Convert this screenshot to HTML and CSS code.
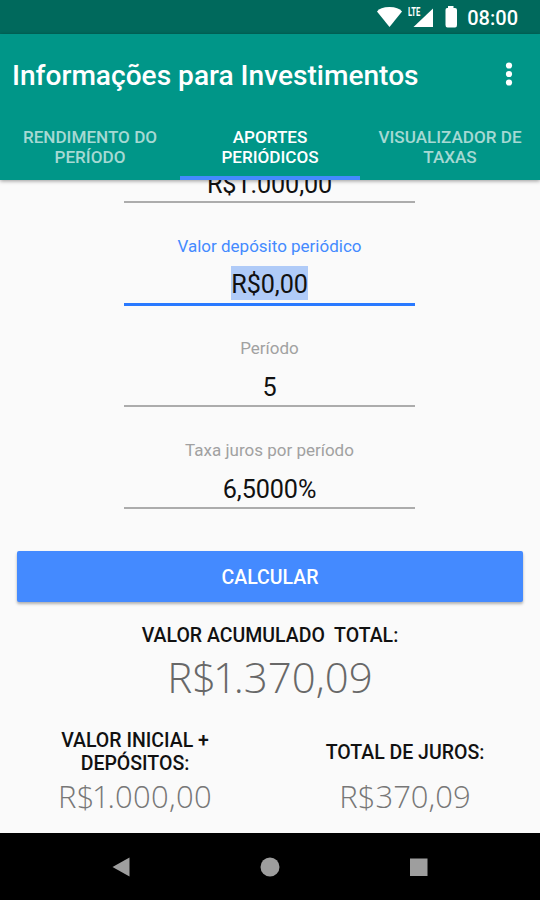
FILE: index.html
```
<!DOCTYPE html>
<html lang="pt-BR">
<head>
<meta charset="utf-8">
<title>Informações para Investimentos</title>
<link rel="stylesheet" href="styles.css">
</head>
<body>
<div class="screen">
  <div class="status">
    <svg class="status-icons" viewBox="0 0 84 34" aria-hidden="true">
      <path fill="#fff" d="M1 11.500 Q4 7 13.500 7 Q22.500 7 26 11.500 L13.500 27 Z"/>
      <path fill="#fff" d="M57 8.500 V27 H37.500 Z"/>
      <path fill="#fff" d="M72 6 H77.500 V8 H79 Q81 8 81 10 V25 Q81 27.500 79 27.500 H71.500 Q69.500 27.500 69.500 25 V10 Q69.500 8 71 8 H72 Z"/>
    </svg>
    <span class="lte">LTE</span>
    <span class="clock">08:00</span>
  </div>
  <header class="appbar">
    <div class="toolbar">
      <h1 class="title">Informações para Investimentos</h1>
      <svg class="more" viewBox="0 0 8 24" aria-hidden="true"><g fill="#fff"><circle cx="4" cy="3.500" r="3.100"/><circle cx="4" cy="12" r="3.100"/><circle cx="4" cy="20.500" r="3.100"/></g></svg>
    </div>
    <nav class="tabs">
      <div class="tab">RENDIMENTO DO<br>PERÍODO</div>
      <div class="tab active">APORTES<br>PERIÓDICOS</div>
      <div class="tab">VISUALIZADOR DE<br>TAXAS</div>
    </nav>
  </header>
  <main class="content">
    <div class="field first"><div class="value">R$1.000,00</div></div>
    <div class="field focused"><div class="label deposit">Valor depósito periódico</div><div class="value"><span class="selected">R$0,00</span></div></div>
    <div class="field"><div class="label">Período</div><div class="value">5</div></div>
    <div class="field"><div class="label">Taxa juros por período</div><div class="value">6,5000%</div></div>
    <div class="button">CALCULAR</div>
    <div class="heading total">VALOR ACUMULADO&nbsp; TOTAL:</div>
    <div class="amount big">R<span class="tight">$1</span>.370,09</div>
    <div class="results">
      <div class="result"><div class="heading">VALOR INICIAL +<br>DEPÓSITOS:</div><div class="amount wide">R<span class="tight">$1</span>.000,00</div></div>
      <div class="result"><div class="heading">TOTAL DE JUROS:</div><div class="amount">R$370,09</div></div>
    </div>
  </main>
  <div class="navbar">
    <svg viewBox="0 0 20 20"><path fill="#9e9e9e" d="M1.500 10 L18.500 .5 V19.500 Z"/></svg>
    <svg viewBox="0 0 20 20"><circle fill="#9e9e9e" cx="10" cy="10" r="9.500"/></svg>
    <svg viewBox="0 0 20 20"><path fill="#9e9e9e" d="M1 1.500 H18.500 V19 H1 Z"/></svg>
  </div>
</div>
</body>
</html>
```
FILE: styles.css
```
* { box-sizing: border-box; }
body { margin: 0; font-family: Roboto, sans-serif; background: #fafafa; }
.screen { width: 540px; height: 900px; display: flex; flex-direction: column; overflow: hidden; }
.status { position: relative; height: 34px; flex: none; background: #00695c; color: #fff; display: flex; align-items: center; justify-content: flex-end; padding: 2px 22px 0 0; }
.status-icons { position: absolute; left: 376px; top: 0; width: 84px; height: 34px; }
.lte { position: absolute; left: 408px; top: 6px; font-size: 12.500px; line-height: 12px; font-weight: 700; transform: scaleX(.61); transform-origin: left; }
.clock { font-size: 20px; font-weight: 500; line-height: 32px; }
.appbar { position: relative; z-index: 1; height: 146px; flex: none; background: #009688; color: #fff; box-shadow: 0 1px 4px rgba(0,0,0,.4); }
.toolbar { height: 84px; display: flex; align-items: center; justify-content: space-between; padding: 0 27px 4px 12px; }
.title { margin: 0; padding-top: 3px; font-size: 28.100px; font-weight: 500; line-height: 32px; white-space: nowrap; }
.more { width: 8px; height: 24px; }
.tabs { display: grid; grid-template-columns: repeat(3, 1fr); height: 62px; }
.tab { text-align: center; font-size: 17.100px; font-weight: 500; line-height: 19.500px; padding-top: 10px; color: #a6d9d3; white-space: nowrap; }
.tab.active { color: #fff; border-bottom: 4px solid #448aff; }
.content { display: flow-root; flex: none; height: 653px; }
.field { display: flex; flex-direction: column; width: 291px; height: 102px; margin: 0 0 0 124px; border-bottom: 2px solid #acacac; padding-top: 33px; text-align: center; }
.field.first { height: 23px; padding: 0; }
.field.first .value { margin-top: -12px; }
.field .value { font-size: 25.200px; line-height: 34px; color: #111; letter-spacing: -.1px; }
.label { font-size: 17px; line-height: 20px; color: #a1a1a1; margin-bottom: 13px; white-space: nowrap; }
.focused { border-bottom: 3px solid #2979ff; height: 103px; }
.focused + .field { height: 101px; padding-top: 32px; }
.focused .label { color: #448aff; margin-bottom: 10px; }
.selected { display: inline-block; height: 34px; line-height: 38px; background: #b0cbf8; }
.button { width: 506px; height: 51px; margin: 42px 17px 0; background: #448aff; color: #fff; border-radius: 2px; box-shadow: 0 2px 3px rgba(0,0,0,.3); font-size: 19.500px; font-weight: 500; line-height: 53px; text-align: center; }
.heading { font-size: 19.500px; font-weight: 500; line-height: 23px; text-align: center; color: #111; white-space: nowrap; }
.total { margin-top: 22px; }
.amount { font-family: "Open Sans", sans-serif; font-weight: 300; font-size: 31px; line-height: 40px; text-align: center; color: #777; white-space: nowrap; }
.tight { letter-spacing: -.075em; }
.wide { letter-spacing: .3px; }
.big { font-size: 42px; line-height: 54px; margin-top: 3px; color: #686868; }
.results { display: grid; grid-template-columns: 1fr 1fr; margin-top: 25px; }
.result { height: 90px; display: grid; grid-template-rows: 46px 44px; align-items: center; }
.result .amount { height: 42px; }
.navbar { height: 67px; flex: none; background: #000; display: flex; justify-content: center; gap: 129px; align-items: center; }
.navbar svg { width: 20px; height: 20px; }
```
